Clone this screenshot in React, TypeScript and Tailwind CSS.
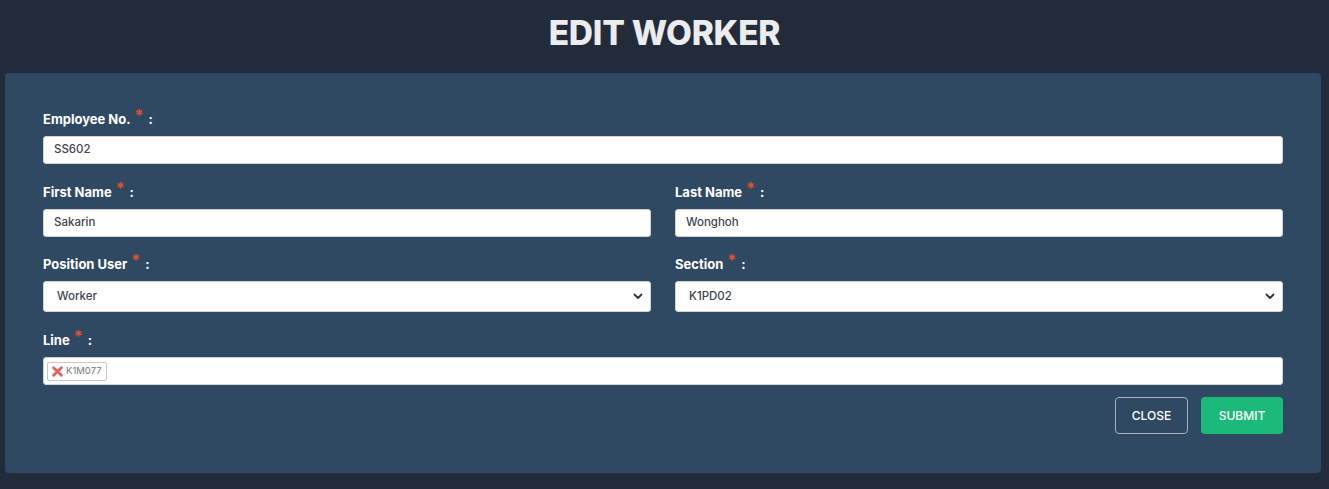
import React from "react";

const font = { fontFamily: "Inter, 'Noto Sans', sans-serif" };

function Label({ text }: { text: string }) {
  return (
    <div className="mb-[8px] flex items-start text-[13px] font-bold text-white leading-[18px]">
      <span>{text}</span>
      <span className="ml-[4px] text-[#e2512f] text-[16px] leading-[11px]">*</span>
      <span className="ml-[5px]">:</span>
    </div>
  );
}

function TextInput({ value }: { value: string }) {
  return (
    <div className="flex h-[28px] items-center rounded-[3px] border border-[#ced4da] bg-white pl-[10px] text-[11.5px] font-medium text-[#404550]">
      {value}
    </div>
  );
}

function Select({ value }: { value: string }) {
  return (
    <div className="flex h-[31px] items-center justify-between rounded-[3px] border border-[#ced4da] bg-white pl-[13px] pr-[7px] text-[11.5px] font-medium text-[#404550]">
      <span>{value}</span>
      <svg width="10" height="7" viewBox="0 0 10 7" fill="none">
        <path d="M1.5 1.5 L5 5 L8.5 1.5" stroke="#333" strokeWidth="1.8" strokeLinecap="round" strokeLinejoin="round" />
      </svg>
    </div>
  );
}

export default function App() {
  return (
    <div className="min-h-[489px] w-full bg-[#212b3a]" style={font}>
      <div className="flex h-[73px] items-center justify-center pb-[6px]">
        <h1 className="text-[33.5px] font-extrabold tracking-[-0.2px] text-[#ececee]">EDIT WORKER</h1>
      </div>
      <div className="mx-[5px] h-[400px] w-[1316px] rounded-[4px] bg-[#2f4962] px-[38px] pt-[37px]">
        <Label text="Employee No." />
        <TextInput value="SS602" />
        <div className="mt-[19px] grid grid-cols-2 gap-x-[24px]">
          <div>
            <Label text="First Name" />
            <TextInput value="Sakarin" />
          </div>
          <div>
            <Label text="Last Name" />
            <TextInput value="Wonghoh" />
          </div>
        </div>
        <div className="mt-[18px] grid grid-cols-2 gap-x-[24px]">
          <div>
            <Label text="Position User" />
            <Select value="Worker" />
          </div>
          <div>
            <Label text="Section" />
            <Select value="K1PD02" />
          </div>
        </div>
        <div className="mt-[19px]">
          <Label text="Line" />
          <div className="flex h-[28px] items-center rounded-[3px] border border-[#ced4da] bg-white pl-[3px]">
            <span className="flex h-[19px] items-center gap-[3px] rounded-[2px] border border-[#c8c8c8] px-[4px] text-[9.5px] text-[#777]">
              <svg width="11" height="11" viewBox="0 0 10 10">
                <path d="M1.5 1.5 L8.5 8.5 M8.5 1.5 L1.5 8.5" stroke="#e0625a" strokeWidth="2.6" strokeLinecap="round" />
              </svg>
              K1M077
            </span>
          </div>
        </div>
        <div className="mt-[12px] flex justify-end gap-[13px]">
          <button className="h-[37px] w-[73px] rounded-[4px] border border-[#a9b2bd] text-[12px] font-medium text-white">
            CLOSE
          </button>
          <button className="h-[37px] w-[82px] rounded-[4px] bg-[#1bb97a] text-[12px] font-medium text-white">
            SUBMIT
          </button>
        </div>
      </div>
    </div>
  );
}
